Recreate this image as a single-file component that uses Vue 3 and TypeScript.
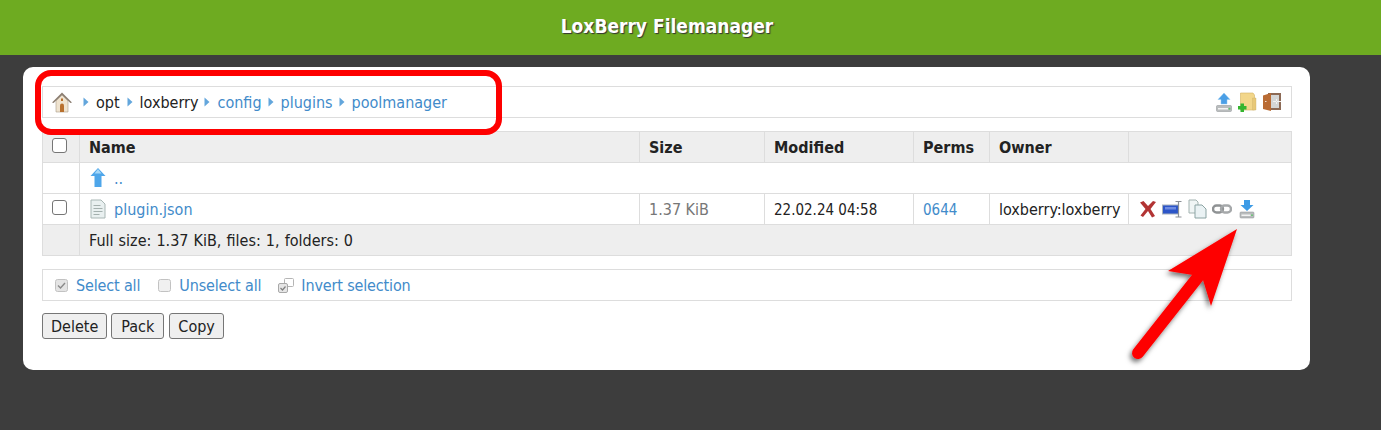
<template>
  <div class="page">
    <header class="topbar">LoxBerry Filemanager</header>
    <main class="card">
      <div class="path-bar">
        <div class="crumbs">
          <svg class="home" viewBox="0 0 22 22" width="22" height="22">
            <path d="M5 10v11h12V10L11 4z" fill="#efe3cf" stroke="#a89a86" stroke-width=".6" />
            <path d="M1 11.500 11 1.500l10 10-1.600.6L11 4 2.600 12.100z" fill="#8c7f72" />
            <path d="M9 21v-6.500a2 2 0 0 1 4 0V21z" fill="#b8702e" />
            <rect x="10" y="7.500" width="2" height="2.500" fill="#b8702e" />
          </svg>
          <template v-for="c in crumbs" :key="c.label">
            <svg class="sep" viewBox="0 0 6 10" width="6" height="10"><path d="M.5 .5 5.500 5 .5 9.500z" fill="#63a6dc" /></svg>
            <a v-if="c.link" class="link">{{ c.label }}</a>
            <span v-else class="plain">{{ c.label }}</span>
          </template>
        </div>
        <div class="tools">
          <svg viewBox="0 0 16 20" width="16" height="20">
            <path d="M8 1 14 7.500H11V12H5V7.500H2z" fill="#4a9fe6" stroke="#8cc6f2" stroke-width=".5" />
            <rect x=".5" y="13.500" width="15" height="6" rx="1" fill="#b9bcbd" stroke="#8b8e90" stroke-width=".5" />
            <rect x="2" y="16" width="10" height="1.500" fill="#f4f4f4" />
            <circle cx="13.500" cy="16.800" r="1" fill="#5fc46b" />
          </svg>
          <svg viewBox="0 0 20 20" width="20" height="20">
            <path d="M3.500 1h12.500l1.500 2v15H3.500z" fill="#f2d68a" stroke="#d3b262" stroke-width=".6" />
            <path d="M15.500 6h3.500v12h-3.500z" fill="#e8c877" stroke="#cdb06a" stroke-width=".4" />
            <path d="M3.500 11.500h3.500v2.500h2.500v3.500H7V20H3.500v-2.500H1V14h2.500z" fill="#35b52f" />
          </svg>
          <svg viewBox="0 0 20 20" width="20" height="20">
            <rect x="6" y="1" width="13" height="17" fill="#8c6a55" />
            <rect x="9" y="3" width="8" height="13" fill="#d4d6d6" />
            <path d="M1 3.500 9 1v18l-8-2z" fill="#b96b33" />
            <rect x="3" y="9" width="1.500" height="1" fill="#f1e1d2" />
            <path d="M11 9h8v1h-8zM14 7v5h1V7z" fill="#f2f2f2" />
          </svg>
        </div>
      </div>

      <table class="files">
        <colgroup>
          <col style="width: 37px" /><col style="width: 560px" /><col style="width: 125px" />
          <col style="width: 149px" /><col style="width: 76px" /><col style="width: 139px" /><col />
        </colgroup>
        <thead>
          <tr>
            <th class="check-cell"><span class="box"></span></th>
            <th>Name</th><th>Size</th><th>Modified</th><th>Perms</th><th>Owner</th><th></th>
          </tr>
        </thead>
        <tbody>
          <tr>
            <td></td>
            <td colspan="6">
              <span class="name">
                <svg viewBox="0 0 16 20" width="16" height="20">
                  <path d="M8 0 15.500 8H11.500v11h-7V8H.5z" fill="#4ea6ea" />
                  <path d="M8 1 4.500 5.500h7z" fill="#a6d8f8" />
                </svg>
                <a class="link">..</a>
              </span>
            </td>
          </tr>
          <tr>
            <td class="check-cell"><span class="box"></span></td>
            <td>
              <span class="name">
                <svg viewBox="0 0 16 20" width="16" height="20">
                  <path d="M1 1h10l4 4v14H1z" fill="#e9f0f0" stroke="#a9b7b5" stroke-width="1" />
                  <path d="M3.500 6h7v1h-7zM3.500 9h9v1h-9zM3.500 12h9v1h-9zM3.500 15h6v1h-6z" fill="#a4b0ae" />
                </svg>
                <a class="link">plugin.json</a>
              </span>
            </td>
            <td class="muted">1.37 KiB</td>
            <td class="num">22.02.24 04:58</td>
            <td class="num"><a class="link">0644</a></td>
            <td>loxberry:loxberry</td>
            <td>
              <div class="actions">
                <svg viewBox="0 0 18 18" width="18" height="18">
                  <path d="M1 2.500 4.500 1 9 6l5-5 3 1-5.500 7 4.500 7-3 1.500L9 11l-5 6-2.500-1.500L6.500 9z" fill="#b23434" />
                </svg>
                <svg viewBox="0 0 21 18" width="21" height="18">
                  <rect x=".5" y="5" width="16" height="9" fill="#2c55c8" stroke="#a8b2bd" />
                  <rect x="3" y="7" width="11" height="2.500" fill="#6f8ce2" />
                  <path d="M13.500 1.500h6M13.500 17h6M16.500 1.500V17" stroke="#8b9096" stroke-width="1.200" fill="none" />
                </svg>
                <svg viewBox="0 0 19 20" width="19" height="20">
                  <path d="M1 1h7l2 2v11H1z" fill="#f0f5f5" stroke="#a3b3b1" />
                  <path d="M7 6h7l4 4v9H7z" fill="#eaf2f4" stroke="#8ba3a3" />
                </svg>
                <svg viewBox="0 0 20 10" width="20" height="10">
                  <rect x="1" y="1.500" width="10" height="7" rx="3.500" fill="none" stroke="#8f9294" stroke-width="2.400" />
                  <rect x="9" y="1.500" width="10" height="7" rx="3.500" fill="none" stroke="#a5a8aa" stroke-width="2.400" />
                </svg>
                <svg class="dl" viewBox="0 0 16 20" width="16" height="20">
                  <path d="M5 1h6v5h3.500L8 12 1.500 6H5z" fill="#3d9be6" />
                  <rect x="1" y="13" width="14" height="6" rx="1" fill="#b9bcbd" stroke="#8b8e90" stroke-width=".5" />
                  <rect x="2.500" y="15.500" width="9" height="1.500" fill="#f2f2f2" />
                  <circle cx="13" cy="16.200" r=".9" fill="#5fc46b" />
                </svg>
              </div>
            </td>
          </tr>
        </tbody>
        <tfoot>
          <tr>
            <td></td>
            <td colspan="6">Full size: 1.37 KiB, files: 1, folders: 0</td>
          </tr>
        </tfoot>
      </table>

      <div class="select-bar">
        <span class="sel">
          <svg viewBox="0 0 13 13" width="13" height="13">
            <rect x=".5" y=".5" width="12" height="12" rx="2" fill="#e4e4e4" stroke="#c2c2c2" />
            <path d="M3 6.500 5.500 9 10 4" fill="none" stroke="#8a8a8a" stroke-width="1.400" />
          </svg>
          <a class="link">Select all</a>
        </span>
        <span class="sel">
          <svg viewBox="0 0 13 13" width="13" height="13">
            <rect x=".5" y=".5" width="12" height="12" rx="2" fill="#f0f0f0" stroke="#c2c2c2" />
          </svg>
          <a class="link">Unselect all</a>
        </span>
        <span class="sel invert">
          <svg viewBox="0 0 16 16" width="16" height="16">
            <rect x="6.500" y="1.500" width="9" height="8" rx="1" fill="#fff" stroke="#b5b5b5" />
            <rect x=".5" y="6.500" width="9" height="9" rx="1.500" fill="#e6e6e6" stroke="#a8a8a8" />
            <path d="M2.500 11 4.500 13 7.500 9.500" fill="none" stroke="#808080" stroke-width="1.200" />
          </svg>
          <a class="link">Invert selection</a>
        </span>
      </div>

      <div class="buttons">
        <button v-for="b in buttons" :key="b" type="button">{{ b }}</button>
      </div>
    </main>

    <!-- red annotations drawn on top of the screenshot -->
    <svg class="marks" viewBox="0 0 1381 430" width="1381" height="430">
      <defs>
        <filter id="arrow-shadow" x="-20%" y="-20%" width="140%" height="140%">
          <feDropShadow dx="-2" dy="3" stdDeviation="2.500" flood-color="#000" flood-opacity=".55" />
        </filter>
      </defs>
      <rect x="38" y="73" width="461" height="59" rx="13" fill="none" stroke="#fe0000" stroke-width="6" />
      <g filter="url(#arrow-shadow)">
        <path d="M1237 229 1168 271 1193 275 1203 280 1211 306z" fill="#fe0000" />
        <path d="M1198 277 1138 353" stroke="#fe0000" stroke-width="12" stroke-linecap="round" fill="none" />
      </g>
    </svg>
  </div>
</template>

<script setup lang="ts">
const crumbs = [
  { label: 'opt', link: false },
  { label: 'loxberry', link: false },
  { label: 'config', link: true },
  { label: 'plugins', link: true },
  { label: 'poolmanager', link: true }
]

const buttons = ['Delete', 'Pack', 'Copy']
</script>

<style>
html,
body {
  margin: 0;
  background: #3d3d3d;
}
</style>

<style scoped>
.page {
  position: relative;
  width: 1381px;
  height: 430px;
  overflow: hidden;
  background: #3d3d3d;
  font-family: "DejaVu Sans", "Open Sans", sans-serif;
  font-stretch: condensed;
  font-size: 16px;
  color: #222;
}

.topbar {
  height: 55px;
  line-height: 52px;
  text-align: center;
  padding-right: 47px;
  background: #6eab21;
  color: #fff;
  font-size: 19px;
  font-weight: 700;
  text-shadow: 1px 1px 1px #333;
}

.card {
  box-sizing: border-box;
  width: 1287px;
  height: 303px;
  margin: 12px 0 0 23px;
  padding: 19px 18px 19px 19px;
  background: #fff;
  border-radius: 10px;
}

.path-bar {
  display: flex;
  align-items: center;
  justify-content: space-between;
  box-sizing: border-box;
  height: 32px;
  padding: 0 9px 0 8px;
  border: 1px solid #ddd;
}

.crumbs {
  display: flex;
  align-items: center;
}

.home {
  margin-right: 10px;
}

.sep {
  margin-right: 7px;
}

.crumbs .plain,
.crumbs .link {
  margin-right: 6px;
}

.crumbs .plain:first-of-type {
  margin-right: 7px;
}

.tools {
  display: flex;
  align-items: center;
  gap: 5px;
}

.link {
  color: #428bca;
}

.files {
  width: 1250px;
  margin-top: 13px;
  border-collapse: collapse;
  table-layout: fixed;
}

.files th,
.files td {
  height: 31px;
  padding: 0 9px;
  border: 1px solid #ddd;
  text-align: left;
  box-sizing: border-box;
  white-space: nowrap;
}

.files th {
  background: #eee;
  font-weight: 700;
}

.files tfoot td {
  background: #eee;
  word-spacing: 0.5px;
}

.files .check-cell {
  padding: 0 0 0 9px;
}

.files .num {
  padding-top: 2px;
  font-size: 15px;
}

.muted {
  color: #777;
}

.box {
  display: block;
  box-sizing: border-box;
  width: 15px;
  height: 15px;
  margin-top: -4px;
  background: #fff;
  border: 1px solid #767676;
  border-radius: 3px;
}

.name {
  display: flex;
  align-items: center;
  gap: 8px;
  margin-left: 1px;
}

.actions {
  display: flex;
  align-items: center;
  gap: 5px;
  margin-left: 1px;
}

.actions .dl {
  margin-left: 2px;
}

.select-bar {
  display: flex;
  align-items: center;
  gap: 18px;
  box-sizing: border-box;
  height: 32px;
  margin-top: 13px;
  padding: 0 12px;
  border: 1px solid #ddd;
}

.select-bar .link {
  letter-spacing: -0.15px;
}

.sel {
  display: flex;
  align-items: center;
  gap: 8px;
}

.sel.invert {
  gap: 7px;
  margin-left: -1px;
}

.buttons {
  display: flex;
  gap: 5px;
  margin-top: 12px;
}

.buttons button {
  height: 26px;
  padding: 0 8px;
  background: #efefef;
  border: 1px solid #767676;
  border-radius: 3px;
  color: #222;
  font: inherit;
}

.buttons button:nth-child(2) {
  margin-left: -1px;
  padding: 0 9px;
}

.marks {
  position: absolute;
  top: 0;
  left: 0;
  pointer-events: none;
}
</style>
